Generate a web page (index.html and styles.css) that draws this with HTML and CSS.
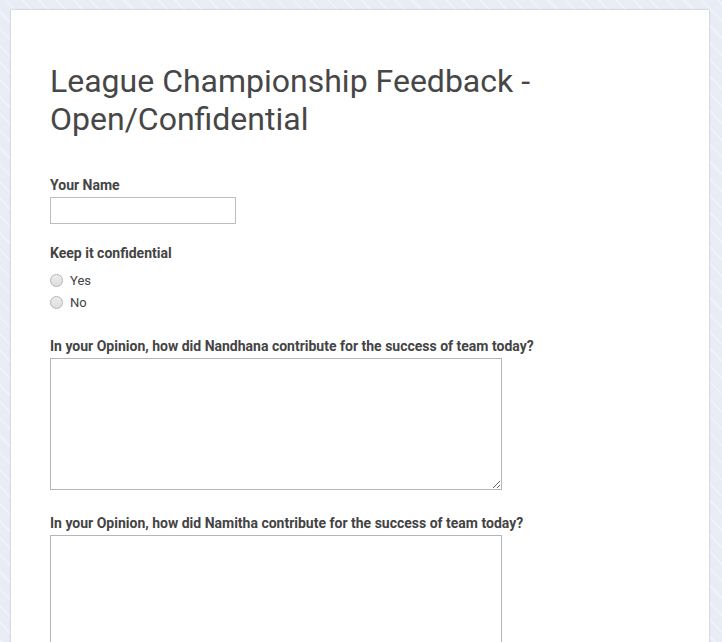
FILE: index.html
```html
<!DOCTYPE html>
<html lang="en">
<head>
<meta charset="utf-8">
<title>League Championship Feedback - Open/Confidential</title>
<link rel="stylesheet" href="styles.css">
</head>
<body>
<main class="card">
  <h1 class="title">League Championship Feedback - Open/Confidential</h1>
  <form class="form">
    <div class="field field-text">
      <label class="label" for="name">Your Name</label>
      <input class="input" type="text" id="name">
    </div>
    <div class="field field-radio">
      <div class="label">Keep it confidential</div>
      <label class="radio-row"><input class="radio" type="radio" name="conf"><span>Yes</span></label>
      <label class="radio-row"><input class="radio" type="radio" name="conf"><span>No</span></label>
    </div>
    <div class="field field-area">
      <label class="label" for="q1">In your Opinion, how did Nandhana contribute for the success of team today?</label>
      <textarea class="area" id="q1"></textarea>
    </div>
    <div class="field field-area">
      <label class="label" for="q2">In your Opinion, how did Namitha contribute for the success of team today?</label>
      <textarea class="area" id="q2"></textarea>
    </div>
  </form>
</main>
</body>
</html>
```
FILE: styles.css
```css
html, body {
  margin: 0;
  padding: 0;
}
body {
  font-family: Roboto, "Liberation Sans", Arial, sans-serif;
  color: #444;
  background-color: #e9edf5;
  background-image: repeating-linear-gradient(45deg, #e8ecf5 0 10px, #eff2f8 10px 12px);
  min-height: 642px;
  overflow: hidden;
}
.card {
  margin: 10px 0 0 11px;
  width: 698px;
  box-sizing: border-box;
  background: #fff;
  box-shadow: 0 0 2px rgba(0, 0, 0, 0.25);
  padding: 52px 39px 60px;
  min-height: 900px;
}
.title {
  margin: 0;
  font-size: 32px;
  line-height: 38px;
  font-weight: 400;
  color: #474747;
  width: 520px;
}
.form {
  margin-top: 39px;
}
.field {
  display: flex;
  flex-direction: column;
  align-items: flex-start;
}
.field-text {
  margin-bottom: 21px;
}
.field-radio {
  margin-bottom: 25px;
}
.field-area {
  margin-bottom: 25px;
}
.label {
  display: block;
  font-size: 14px;
  line-height: 16px;
  font-weight: 700;
  color: #444;
  margin-bottom: 4px;
}
.field-radio .label {
  margin-bottom: 8px;
}
.input {
  display: block;
  box-sizing: border-box;
  width: 186px;
  height: 27px;
  margin: 0;
  border: 1px solid #bdbdbd;
  border-radius: 0;
  padding: 2px 4px;
  font: 13px Roboto, sans-serif;
  background: #fff;
}
.radio-row {
  display: flex;
  align-items: center;
  height: 22px;
  font-size: 13px;
  color: #444;
}
.radio {
  -webkit-appearance: none;
  appearance: none;
  width: 13px;
  height: 13px;
  margin: 0 7px 0 0;
  border-radius: 50%;
  border: 1px solid #b3b3b3;
  background: linear-gradient(#ececec, #dedede);
  box-sizing: border-box;
}
.area {
  display: block;
  box-sizing: border-box;
  width: 452px;
  height: 132px;
  margin: 0;
  border: 1px solid #b5b5b5;
  border-radius: 0;
  padding: 2px;
  font: 13px Roboto, sans-serif;
  background: #fff;
  resize: both;
}
```
